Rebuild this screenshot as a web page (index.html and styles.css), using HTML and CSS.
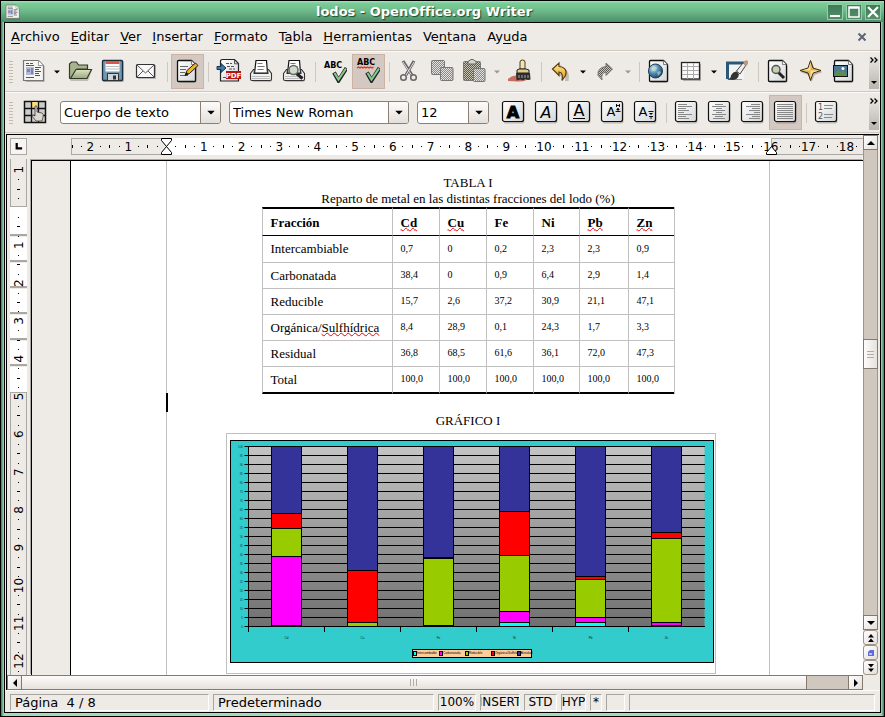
FILE: index.html
```html
<!DOCTYPE html>
<html lang="es">
<head>
<meta charset="utf-8">
<title>lodos - OpenOffice.org Writer</title>
<link rel="stylesheet" href="styles.css">
</head>
<body>
<svg class="defs" aria-hidden="true">
  <defs>
    <linearGradient id="g-paper" x1="0" y1="0" x2="1" y2="1"><stop offset="0" stop-color="#fff"/><stop offset="1" stop-color="#d4d6d8"/></linearGradient>
    <linearGradient id="g-gold" x1="0" y1="0" x2="0" y2="1"><stop offset="0" stop-color="#fff0a0"/><stop offset="1" stop-color="#e0900c"/></linearGradient>
    <linearGradient id="g-folder" x1="0" y1="0" x2="0" y2="1"><stop offset="0" stop-color="#dfe3c4"/><stop offset="1" stop-color="#9aa67e"/></linearGradient>
    <radialGradient id="g-globe" cx=".35" cy=".3" r=".8"><stop offset="0" stop-color="#d4ecf8"/><stop offset=".5" stop-color="#4d86ac"/><stop offset="1" stop-color="#123a5c"/></radialGradient>
    <linearGradient id="g-plot" x1="0" y1="0" x2="0" y2="1"><stop offset="0" stop-color="#c4c4c4"/><stop offset="1" stop-color="#707070"/></linearGradient>
    <pattern id="p-dis" width="2" height="2" patternUnits="userSpaceOnUse"><rect width="2" height="2" fill="#e4e2de"/><path d="M0 0h1v1H0zM1 1h1v1H1z" fill="#8c8a86"/></pattern>
    <pattern id="p-disdark" width="2" height="2" patternUnits="userSpaceOnUse"><rect width="2" height="2" fill="#c8c4b4"/><path d="M0 0h1v1H0zM1 1h1v1H1z" fill="#5c5a50"/></pattern>
    <symbol id="page" viewBox="0 0 24 24"><path d="M3.500 3.500q0-1 1-1h12l4 4v15q0 1-1 1h-15q-1 0-1-1z" fill="#000" opacity=".22" transform="translate(1 1)"/><path d="M2.500 2.500q0-1 1-1h13l4 4v16q0 1-1 1h-16q-1 0-1-1z" fill="url(#g-paper)" stroke="#111" stroke-width="1.300"/><path d="M16.500 1.500v4h4z" fill="#f4f4f4" stroke="#555" stroke-width=".7"/></symbol>
    <symbol id="plate" viewBox="0 0 24 24"><rect x="2.500" y="2.500" width="21" height="21" rx="2" fill="#000" opacity=".22"/><rect x="1.500" y="1.500" width="21" height="20" rx="2" fill="url(#g-paper)" stroke="#111" stroke-width="1.200"/></symbol>
    <symbol id="news" viewBox="0 0 24 24"><path d="M2.500 1.500h14l5 5v15.500h-19z" fill="#000" opacity=".25" transform="translate(1 1)"/><path d="M1.500 1.500h15l5 5v15h-20z" fill="#f4f4f2" stroke="#777" stroke-width="1.200"/><path d="M16.500 1.500v5h5z" fill="#fff" stroke="#999"/><path d="M4 4.500h3m1 0h3M13 8.500h6m-6 2h4m-4 2h6m-6 2h4m-4 2h5M4 18.500h8m-8-12h8" stroke="#555"/><rect x="4" y="8" width="8" height="8" fill="#b4b8d8"/><path d="M5 10h3v3H5zM9 9h2v6H9z" fill="#7c84b0"/></symbol>
    <symbol id="drop" viewBox="0 0 6 4"><path d="M0 .5h6L3 3.500z"/></symbol>
    <symbol id="printer" viewBox="0 0 24 24"><path d="M2 14l4-5h12l4 5v6q0 2-2 2H4q-2 0-2-2z" fill="#000" opacity=".2" transform="translate(1 1)"/><path d="M5.500 14L7 1.500h10.500L18.500 14z" fill="#fff" stroke="#111" stroke-width="1.200"/><path d="M8.500 4.500h5m-5 3h7m-7 3h6" stroke="#777"/><path d="M1.500 14.500l3-4h1l-.5 4h14l-.5-4h1l3 4v5.500q0 1.500-1.500 1.500H3q-1.500 0-1.500-1.500z" fill="#f0f0ee" stroke="#333" stroke-width="1.100"/><path d="M3 17.500h18M3 19.500h18" stroke="#bbb"/></symbol>
    <symbol id="check" viewBox="0 0 24 24"><path d="M11 13.500l4.500 8 8-12.500" fill="none" stroke="#222" stroke-width="4"/><path d="M11.500 14l4 6.500L23 9.500" fill="none" stroke="#86c890" stroke-width="2.200"/></symbol>
  </defs>
</svg>

<div class="window">
  <header class="titlebar">
    <svg class="app-icon"><use href="#news"/></svg>
    <h1 class="title">lodos - OpenOffice.org Writer</h1>
    <button class="win-btn" aria-label="Minimizar"><svg viewBox="0 0 14 14"><path d="M2 11h10" stroke="#fff" stroke-width="2"/></svg></button>
    <button class="win-btn" aria-label="Maximizar"><svg viewBox="0 0 14 14"><path d="M2 2h10v10H2zM2 3h10" fill="none" stroke="#fff" stroke-width="1.500"/></svg></button>
    <button class="win-btn" aria-label="Cerrar"><svg viewBox="0 0 14 14"><path d="M2 2l10 10M12 2L2 12" stroke="#fff" stroke-width="2.200"/></svg></button>
  </header>

  <div class="client">
    <nav class="menubar">
      <button><u>A</u>rchivo</button><button><u>E</u>ditar</button><button><u>V</u>er</button><button><u>I</u>nsertar</button><button><u>F</u>ormato</button><button>T<u>a</u>bla</button><button><u>H</u>erramientas</button><button>Ve<u>n</u>tana</button><button>Ay<u>u</u>da</button>
      <button class="doc-close" aria-label="Cerrar documento"><svg viewBox="0 0 10 10"><path d="M1.500 1.500l7 7M8.500 1.500l-7 7" stroke="#5c6478" stroke-width="2"/></svg></button>
    </nav>

    <div class="toolbar">
      <span class="handle"></span>
      <button class="tool split" aria-label="Nuevo"><svg><use href="#news"/></svg></button>
      <button class="arrow" aria-label="Opciones de nuevo"><svg><use href="#drop"/></svg></button>
      <button class="tool" aria-label="Abrir"><svg viewBox="0 0 24 24"><path d="M2 20V6q0-1 1-2l1-1h5l2 3h9v4h4l-4 11H3z" fill="#000" opacity=".2" transform="translate(0 1)"/><path d="M1.500 19V5l2-2h5l2 3h9v4H9L4 19.500H2z" fill="#a9b48c" stroke="#333a28" stroke-width="1.200"/><path d="M2.500 19.500L8 10.500h15.500L19 19.500z" fill="url(#g-folder)" stroke="#333a28" stroke-width="1.200"/></svg></button>
      <button class="tool" aria-label="Guardar"><svg viewBox="0 0 24 24"><rect x="2" y="2" width="21" height="21" rx="1" opacity=".22"/><rect x="1.500" y="1.500" width="20" height="20" rx="1" fill="#6f97b4" stroke="#1c2c38" stroke-width="1.300"/><rect x="4.500" y="2" width="14" height="10.500" fill="#fff"/><path d="M4.500 2h14v3h-14z" fill="#d8584c"/><path d="M5 7.500h13M5 10h13" stroke="#bbb"/><path d="M6.500 14.500h11v7h-11z" fill="#d0d4d6" stroke="#333"/><path d="M12 16.500h3v4h-3z" fill="#333"/></svg></button>
      <button class="tool" aria-label="Correo"><svg viewBox="0 0 24 24"><rect x="4" y="6" width="18" height="14" opacity=".22"/><rect x="2.500" y="5.500" width="18" height="13" rx="1" fill="#f8f8f8" stroke="#333" stroke-width="1.200"/><path d="M3 6l8.500 8L20 6M3 18l6-6m11 6l-6-6" fill="none" stroke="#555"/></svg></button>
      <span class="sep"></span>
      <button class="tool active" aria-label="Editar archivo" aria-pressed="true"><svg viewBox="0 0 24 24"><use href="#page"/><path d="M5 7.500h8M5 10.500h6M5 13.500h5M5 16.500h8" stroke="#666"/><path d="M10 16.500l2-5L20.500 4l2.500 2.500-8.500 8z" fill="#f4b020" stroke="#222"/><path d="M10 16.500l1.500-3.500 2 2z" fill="#111"/></svg></button>
      <span class="sep"></span>
      <button class="tool" aria-label="Exportar a PDF"><svg viewBox="0 0 24 24"><path d="M4.500 22V2.500q0-2 2-2h12l4 4V22z" fill="url(#g-paper)" stroke="#222" stroke-width="1.200"/><path d="M18.500.8v4h4" fill="none" stroke="#555"/><path d="M10 4.500h6m-5 3h8m-6 2.500h6M7 18.500h3" stroke="#555" stroke-dasharray="3 1"/><path d="M1 7.500h4v-3l5 4.500-5 4.500v-3H1z" fill="#3f7ba4" stroke="#14324c"/><rect x="10" y="12" width="15" height="8" fill="#b81414"/><text class="pdf" x="17.500" y="18.500">PDF</text></svg></button>
      <button class="tool" aria-label="Imprimir"><svg><use href="#printer"/></svg></button>
      <button class="tool" aria-label="Vista preliminar"><svg viewBox="0 0 24 24"><use href="#printer"/><path d="M14.500 14.500l6 5" stroke="#222" stroke-width="3"/><circle cx="11.500" cy="11" r="4.500" fill="#d0dcc8" stroke="#666" stroke-width="1.500"/></svg></button>
      <span class="sep"></span>
      <button class="tool" aria-label="Ortografía"><svg viewBox="0 0 24 24"><text class="abc" x="1" y="9">ABC</text><use href="#check"/></svg></button>
      <button class="tool active" aria-label="Revisión automática" aria-pressed="true"><svg viewBox="0 0 24 24"><text class="abc" x="1" y="6">ABC</text><path d="M1 9l1.500-1L4 9l1.500-1L7 9l1.500-1L10 9l1.500-1L13 9l1.500-1L16 9l1.500-1" fill="none" stroke="#f03010" stroke-width="1.300"/><use href="#check"/></svg></button>
      <span class="sep"></span>
      <button class="tool" aria-label="Cortar"><svg viewBox="0 0 24 24"><path d="M6 2l9 14M17 2L9 16" stroke="#666" stroke-width="3"/><path d="M6 3l8.500 13M17 3L9 16" stroke="#ddd" stroke-width="1"/><circle cx="6.500" cy="18.500" r="2.800" fill="none" stroke="#666" stroke-width="1.500"/><circle cx="16.500" cy="18.500" r="2.800" fill="none" stroke="#666" stroke-width="1.500"/></svg></button>
      <button class="tool" aria-label="Copiar"><svg viewBox="0 0 24 24"><rect x="1.500" y="1.500" width="13" height="14" rx="1" fill="url(#p-dis)" stroke="#777"/><rect x="10.500" y="8.500" width="12.500" height="13" rx="1" fill="url(#p-dis)" stroke="#777"/></svg></button>
      <button class="tool split" aria-label="Pegar"><svg viewBox="0 0 24 24"><rect x="1.500" y="2.500" width="17" height="19" rx="1" fill="url(#p-disdark)" stroke="#777"/><path d="M6 5V2.500l3-2h2l3 2V5z" fill="#d8d6d0" stroke="#666"/><rect x="11.500" y="9.500" width="11.500" height="13" rx="1" fill="url(#p-dis)" stroke="#777"/></svg></button>
      <button class="arrow off" aria-label="Opciones de pegar"><svg><use href="#drop"/></svg></button>
      <button class="tool" aria-label="Pincel de formato"><svg viewBox="0 0 24 24"><path d="M0 20q5-5 10-3l10 2q-2 4-10 3.500Q4 22 0 22z" fill="#b84434" opacity=".75"/><path d="M12 10V3q0-2 2.500-2T17 3v7z" fill="#f0e4b8" stroke="#4c3c18"/><path d="M9 14v-3l2-1h7l3 1v3z" fill="#e4cc8c" stroke="#222"/><path d="M8 14h14l.5 6.500q-3 1-5-.5-2 2-5 .5l-4 1z" fill="#2c2c2c"/><path d="M11 16v3m3-3v3m3-3v3m3-3v3" stroke="#aaa"/></svg></button>
      <span class="sep"></span>
      <button class="tool split" aria-label="Deshacer"><svg viewBox="0 0 24 24"><path d="M5.500 10l7-6v3.500q9 1 7 13h-3.500q1.500-7-3.500-7.500v3.500z" opacity=".2" transform="translate(1 1.500)"/><path d="M4.500 10L11 4v3.500q9 1 6.500 9l-3.500 5q1.500-8-3-8.500v3.500z" fill="url(#g-gold)" stroke="#5c3c08" stroke-width="1.200"/></svg></button>
      <button class="arrow" aria-label="Opciones de deshacer"><svg><use href="#drop"/></svg></button>
      <button class="tool split" aria-label="Restaurar"><svg viewBox="0 0 24 24"><path d="M19.500 10L13 4v3.500q-9 1-8 9l4 4.500q-1.500-7 4-8v3.500z" fill="url(#p-disdark)" stroke="#777"/></svg></button>
      <button class="arrow off" aria-label="Opciones de restaurar"><svg><use href="#drop"/></svg></button>
      <span class="sep"></span>
      <button class="tool" aria-label="Hiperenlace"><svg viewBox="0 0 24 24"><use href="#page"/><circle cx="8.500" cy="12" r="7" fill="url(#g-globe)" stroke="#1c3c58"/><path d="M5 9l3-2 2 2-2 3H5zM10 13l3-1 1 2-3 3z" fill="#c4dccc" opacity=".6"/></svg></button>
      <button class="tool split" aria-label="Tabla"><svg viewBox="0 0 24 24"><rect x="4" y="5" width="18" height="17" opacity=".25"/><rect x="2.500" y="3.500" width="18" height="16.500" fill="#fafafa" stroke="#222" stroke-width="1.300"/><path d="M3 7.500h17M3 11.500h17M3 15.500h17M8.500 4v16M14.500 4v16" stroke="#aaa"/></svg></button>
      <button class="arrow" aria-label="Opciones de tabla"><svg><use href="#drop"/></svg></button>
      <button class="tool" aria-label="Dibujo"><svg viewBox="0 0 24 24"><path d="M2 3h17v17H2z" fill="#f2f2f0"/><path d="M2.500 20V4H20" fill="none" stroke="#2c5878" stroke-width="3"/><path d="M3 20.500h14" stroke="#999"/><path d="M2 20.500q4-1 4-4 2-4 6-4l2 3q-1 5-6 5.500z" fill="#333"/><path d="M11.500 12L18 4l3 2-6 9z" fill="#eee" stroke="#444"/><path d="M18 4l3-3 2 1v3l-2 2z" fill="#c09878"/></svg></button>
      <span class="sep"></span>
      <button class="tool" aria-label="Buscar"><svg viewBox="0 0 24 24"><use href="#page"/><path d="M12 13l6 6" stroke="#222" stroke-width="3"/><circle cx="10" cy="10.500" r="4" fill="#c4d0b4" stroke="#555" stroke-width="1.500"/></svg></button>
      <button class="tool" aria-label="Navegador"><svg viewBox="0 0 24 24"><path d="M12.500 2l3 8 8 3-8 3-3 7-3-7-8-3 8-3z" opacity=".25"/><path d="M11.500 1.500l2.500 7.500 8 2.500-8 2.500-2.500 7.500L9 14l-8-2.500L9 9z" fill="#e4b04c" stroke="#3c2c10"/><path d="M11.500 3v8.500H3L9.500 9.500zM11.500 11.500h8.500l-6 2-2.500 6z" fill="#fff0bc" opacity=".75"/></svg></button>
      <button class="tool" aria-label="Galería"><svg viewBox="0 0 24 24"><use href="#page"/><rect x="1.500" y="6.500" width="14" height="11" fill="#4c7898" stroke="#111"/><path d="M2 16l4-6 3 3 2-2 4 5v1H2z" fill="#5c8c54"/><circle cx="11" cy="9.500" r="1.500" fill="#fff"/></svg></button>
      <button class="more" aria-label="Más botones"><svg viewBox="0 0 10 35"><path d="M1.500 3.500L4 6 1.500 8.500M5.500 3.500L8 6 5.500 8.500" fill="none" stroke="#000" stroke-width="1.300"/><path d="M2 27h6l-3 3z"/></svg></button>
    </div>

    <div class="toolbar">
      <span class="handle"></span>
      <button class="tool styles" aria-label="Estilo y formato"><svg viewBox="0 0 24 24"><rect x="1.500" y="1.500" width="21" height="21" fill="#ccc" stroke="#111" stroke-width="1.500"/><path d="M9 2h6v6H9z" fill="#fcdc7c"/><path d="M8.500 1v22M15.500 1v22M1 8.500h22M1 15.500h22" stroke="#111" stroke-width="1.300"/><path d="M12 6q2-1 2 1v5l5 1q2 1 1 4l-1 4h-6l-4-5q0-2 3 0z" fill="#ddd8d0" stroke="#444" stroke-width=".8"/></svg></button>
      <label class="combo combo-style"><select aria-label="Estilo de párrafo"><option>Cuerpo de texto</option></select><span class="combo-btn"><svg><use href="#drop"/></svg></span></label>
      <label class="combo combo-font"><select aria-label="Nombre de fuente"><option>Times New Roman</option></select><span class="combo-btn"><svg><use href="#drop"/></svg></span></label>
      <label class="combo combo-size"><select aria-label="Tamaño de fuente"><option>12</option></select><span class="combo-btn"><svg><use href="#drop"/></svg></span></label>
      <button class="tool" aria-label="Negrita"><svg viewBox="0 0 24 24"><use href="#plate"/><text class="glyph heavy" x="12" y="18">A</text></svg></button>
      <button class="tool" aria-label="Cursiva"><svg viewBox="0 0 24 24"><use href="#plate"/><text class="glyph slant" x="12" y="18">A</text></svg></button>
      <button class="tool" aria-label="Subrayado"><svg viewBox="0 0 24 24"><use href="#plate"/><text class="glyph" x="12" y="16">A</text><path d="M6 18.500h12" stroke="#000"/></svg></button>
      <button class="tool" aria-label="Superíndice"><svg viewBox="0 0 24 24"><use href="#plate"/><text class="glyph small" x="11" y="16">A</text><path d="M16.500 4v3M19.500 4v3M16.500 5.500h3M15.500 11.500h5M18 8v3" stroke="#111"/><path d="M16 10l2-2 2 2z"/></svg></button>
      <button class="tool" aria-label="Subíndice"><svg viewBox="0 0 24 24"><use href="#plate"/><text class="glyph small" x="10" y="16">A</text><path d="M15.500 11.500h5M16 16.500h4M18 16v3" stroke="#111"/><path d="M16 13h4l-2 2z"/></svg></button>
      <span class="sep"></span>
      <button class="tool" aria-label="Alinear a la izquierda"><svg viewBox="0 0 24 24"><use href="#plate"/><path d="M4 4.500h9M4 6.500h14M4 8.500h8M4 10.500h11M4 12.500h6M4 14.500h14M4 16.500h8M4 18.500h11" stroke="#888"/></svg></button>
      <button class="tool" aria-label="Centrar"><svg viewBox="0 0 24 24"><use href="#plate"/><path d="M8 4.500h8M5 6.500h14M9 8.500h6M6 10.500h12M9 12.500h6M5 14.500h14M8 16.500h8M6 18.500h12" stroke="#888"/></svg></button>
      <button class="tool" aria-label="Alinear a la derecha"><svg viewBox="0 0 24 24"><use href="#plate"/><path d="M11 4.500h9M6 6.500h14M12 8.500h8M9 10.500h11M14 12.500h6M6 14.500h14M12 16.500h8M9 18.500h11" stroke="#888"/></svg></button>
      <button class="tool active" aria-label="Justificado" aria-pressed="true"><svg viewBox="0 0 24 24"><use href="#plate"/><path d="M4 4.500h16M4 6.500h16M4 8.500h16M4 10.500h16M4 12.500h16M4 14.500h16M4 16.500h16M4 18.500h16" stroke="#888"/></svg></button>
      <span class="sep"></span>
      <button class="tool" aria-label="Numeración"><svg viewBox="0 0 24 24"><use href="#plate"/><path d="M10 5.500h9M10 8.500h8M10 14.500h9M10 17.500h8" stroke="#888"/><text class="num" x="4" y="10">1</text><text class="num" x="4" y="19">2</text></svg></button>
      <button class="more" aria-label="Más botones"><svg viewBox="0 0 10 35"><path d="M1.500 3.500L4 6 1.500 8.500M5.500 3.500L8 6 5.500 8.500" fill="none" stroke="#000" stroke-width="1.300"/><path d="M2 27h6l-3 3z"/></svg></button>
    </div>

    <main class="workspace">
      <div class="view">
        <div class="hruler">
          <button class="tab-type" aria-label="Tipo de tabulador"><svg viewBox="0 0 10 10"><path d="M3 1v6h6" fill="none" stroke="#000" stroke-width="2.500"/></svg></button>
          <div class="hscale"><span class="out"></span><span class="in"></span><span class="out last"></span><svg id="hticks"></svg></div>
        </div>
        <div class="body">
          <div class="vruler"><span class="vout"></span><span class="vin first"></span><span class="vin"></span><span class="vin"></span><span class="vin"></span><span class="vin"></span><span class="vin"></span><span class="vin end"></span><span class="vout grow"></span><svg id="vticks"></svg></div>
          <div class="desk">
            <article class="page">
              <div class="text">
                <i class="caret"></i>
                <p>TABLA I</p>
                <p>Reparto de metal en las distintas fracciones del lodo (%)</p>
                <table>
                  <thead><tr><th class="name">Fracción</th><th><span class="sp">Cd</span></th><th><span class="sp">Cu</span></th><th>Fe</th><th class="ni">Ni</th><th class="pb"><span class="sp">Pb</span></th><th class="zn"><span class="sp">Zn</span></th></tr></thead>
                  <tbody>
                    <tr><th>Intercambiable</th><td>0,7</td><td>0</td><td>0,2</td><td>2,3</td><td>2,3</td><td>0,9</td></tr>
                    <tr><th>Carbonatada</th><td>38,4</td><td>0</td><td>0,9</td><td>6,4</td><td>2,9</td><td>1,4</td></tr>
                    <tr><th>Reducible</th><td>15,7</td><td>2,6</td><td>37,2</td><td>30,9</td><td>21,1</td><td>47,1</td></tr>
                    <tr><th>Orgánica/<span class="sp">Sulfhídrica</span></th><td>8,4</td><td>28,9</td><td>0,1</td><td>24,3</td><td>1,7</td><td>3,3</td></tr>
                    <tr><th>Residual</th><td>36,8</td><td>68,5</td><td>61,6</td><td>36,1</td><td>72,0</td><td>47,3</td></tr>
                    <tr><th>Total</th><td>100,0</td><td>100,0</td><td>100,0</td><td>100,0</td><td>100,0</td><td>100,0</td></tr>
                  </tbody>
                </table>
                <p class="caption">GRÁFICO I</p>
                <figure><svg id="chart" viewBox="0 0 484 223"></svg></figure>
              </div>
            </article>
          </div>
        </div>
        <div class="hscroll">
          <button class="sb" aria-label="Izquierda"><svg viewBox="0 0 10 10"><path d="M7 1v8L3 5z"/></svg></button>
          <div class="htrack"><div class="hthumb"><i></i><i></i><i></i></div></div>
          <button class="sb" aria-label="Derecha"><svg viewBox="0 0 10 10"><path d="M3 1v8l4-4z"/></svg></button>
        </div>
      </div>
      <div class="vscroll">
        <button class="sb" aria-label="Arriba"><svg viewBox="0 0 10 10"><path d="M1 7h8L5 3z"/></svg></button>
        <div class="vtrack"><div class="vthumb"><i></i><i></i><i></i></div></div>
        <button class="sb" aria-label="Abajo"><svg viewBox="0 0 10 10"><path d="M1 3h8L5 7z"/></svg></button>
        <button class="sb round" aria-label="Página anterior"><svg viewBox="0 0 10 10"><path d="M2 4.500h6L5 1zM2 9h6L5 5.500z"/></svg></button>
        <button class="sb round" aria-label="Navegación"><svg viewBox="0 0 10 10"><path d="M2 4l2-2h4v6H2z" fill="#5c6cdc"/><path d="M3 5h3v2H3z" fill="#b4bcfc"/></svg></button>
        <button class="sb round" aria-label="Página siguiente"><svg viewBox="0 0 10 10"><path d="M2 1h6L5 4.500zM2 5.500h6L5 9z"/></svg></button>
      </div>
    </main>

    <footer class="status">
      <span class="f page-no">Página&nbsp; 4 / 8</span><span class="f style-name">Predeterminado</span><span class="f c zoom">100%</span><span class="f c ins">INSERT</span><span class="f c std">STD</span><span class="f c hyp">HYP</span><span class="f c mod">*</span><span class="f sig"></span><span class="f rest"></span>
    </footer>
  </div>
</div>
<script src="script.js"></script>
</body>
</html>
```

FILE: styles.css
```css
* { box-sizing: border-box; }
body { margin: 0; font: 13px/16px "DejaVu Sans", sans-serif; color: #000; }
.defs { position: absolute; width: 0; height: 0; }
button { appearance: none; border: 0; background: none; padding: 0; margin: 0; font: inherit; color: inherit; display: flex; align-items: center; justify-content: center; flex: none; }
p, h1, figure { margin: 0; }

.window { min-height: 100vh; display: flex; flex-direction: column; border: 1px solid #000; background: #000; }
.titlebar { display: flex; align-items: center; gap: 3px; height: 21px; padding: 0 3px 0 4px; background: linear-gradient(#a8e4bc 0, #7ccd98 2px, #6fbd8c 9px, #4c8f68 100%); }
.app-icon { width: 16px; height: 16px; }
.title { flex: 1; text-align: center; font-size: 13px; line-height: 16px; font-weight: bold; color: #fff; text-shadow: 1px 1px 1px #1d4a30; }
.win-btn { width: 16px; height: 16px; border: 1px solid #8fd0a6; background: linear-gradient(#3f7a58, #558f6c); }
.win-btn svg { width: 14px; height: 14px; }

.client { flex: 1; display: flex; flex-direction: column; border: solid #8fcca4; border-width: 0 3px 3px; background: #eeebe6; box-shadow: inset 1px 0 #000, inset -1px 0 #000, inset 0 1px #000, inset 0 -1px #000; padding: 1px; border-image: linear-gradient(90deg, #3d7a57, #a5dcb8 3px, #a5dcb8 calc(100% - 3px), #3d7a57) 3; }

.menubar { display: flex; height: 28px; padding: 0 13px 0 0; border-bottom: 1px solid #d0c8bf; }
.menubar button { display: block; padding: 0 5px 0 6px; line-height: 27px; }
.menubar button u { text-underline-offset: 2px; text-decoration-thickness: 1px; }
.menubar .doc-close { margin-left: auto; padding: 0; display: flex; }
.doc-close svg { width: 10px; height: 10px; }

.toolbar { display: flex; align-items: center; height: 41px; padding: 0 1px 0 4px; border-top: 1px solid #fbfaf8; border-bottom: 1px solid #d0c8bf; }
.handle { width: 4px; height: 22px; margin-right: 6px; background: repeating-linear-gradient(#c8baac 0 1px, transparent 1px 3px); }
.tool { width: 33px; height: 35px; padding: 0 2px 2px 0; }
.tool svg { width: 24px; height: 24px; overflow: visible; flex: none; }
.tool.split { width: 31px; }
.tool.active { background: #d3c9c2; box-shadow: inset 0 0 0 1px #cbb4a4; }
.tool.styles { margin-right: 8px; }
.tool text { font-family: "DejaVu Sans", sans-serif; }
.abc { font-size: 8px; font-weight: bold; }
.pdf { font-size: 7px; font-weight: bold; fill: #fff; text-anchor: middle; }
.glyph { font-size: 16px; text-anchor: middle; }
.heavy { font-weight: bold; stroke: #000; stroke-width: 1px; }
.slant { font-style: oblique; }
.small { font-size: 13px; }
.num { font-size: 8px; fill: #555; }
.arrow { width: 14px; height: 35px; }
.arrow svg { width: 6px; height: 4px; }
.arrow.off { opacity: .35; }
.sep { flex: none; width: 8px; height: 20px; background: linear-gradient(#d0c8bf, #d0c8bf) center / 1px 100% no-repeat; }
.more { width: 10px; height: 35px; margin-left: auto; background: linear-gradient(#eeebe6, #b8b4ae); }
.more svg { width: 10px; height: 35px; }

.combo { display: grid; grid-template-columns: 1fr 20px; flex: none; height: 23px; margin-right: 8px; border: 1px solid #8c7f74; border-radius: 3px; background: #fff; overflow: hidden; }
.combo select { grid-area: 1 / 1 / 2 / 3; appearance: none; border: 0; background: none; font: inherit; color: inherit; padding: 0 0 0 3px; margin: 0; outline: 0; min-width: 0; }
.combo-btn { grid-area: 1 / 2; display: flex; align-items: center; justify-content: center; pointer-events: none; border-left: 1px solid #8c7f74; background: linear-gradient(#fdfcfb, #e4dfda); }
.combo-btn svg { width: 8px; height: 5px; }
.combo-style { width: 161px; }
.combo-font { width: 180px; }
.combo-size { width: 72px; }

.workspace { flex: 1; display: flex; margin: 1px 1px 0; padding-right: 1px; border: solid #000; border-width: 1px 0 0 1px; }
.view { flex: 1; min-width: 0; display: flex; flex-direction: column; }
.hruler { display: flex; height: 24px; padding: 3px 0 0 3px; }
.tab-type { width: 17px; height: 17px; border: 1px solid #aaa8a4; background: #f6f5f2; }
.tab-type svg { width: 9px; height: 9px; }
.hscale { position: relative; flex: 1; display: flex; height: 17px; margin-left: 44px; overflow: hidden; font-size: 12px; }
.hscale svg { position: absolute; left: 0; top: 0; width: 100%; height: 17px; }
.out { width: 96px; height: 17px; border: 1px solid #aaa8a4; }
.in { flex: 1; background: #fff; }
.out.last { width: 92px; border-right: 0; }
.body { flex: 1; display: flex; }
.vruler { position: relative; width: 24px; padding-left: 3px; display: flex; flex-direction: column; overflow: hidden; font-size: 12px; }
.vruler svg { position: absolute; left: 3px; top: 0; width: 17px; height: 100%; }
.vruler span { width: 17px; flex: none; }
.vout { height: 48px; border: 1px solid #aaa8a4; border-top: 0; }
.vruler .grow { flex: 1 0 0; border-top: 1px solid #aaa8a4; border-bottom: 0; }
.vin { height: 26px; background: #fff; border-top: 1px solid #aaa8a4; border-bottom: 1px solid #aaa8a4; box-shadow: inset 0 1px #eeebe6; }
.vin.first { height: 28px; border-top: 0; box-shadow: none; }
.vin.end { height: 27px; border-bottom: 0; }

.desk { flex: 1; min-width: 0; padding-left: 38px; border: solid #000; border-width: 1px 0 0 1px; box-shadow: -1px -1px #aaa8a4; margin-top: 1px; }
.page { height: 100%; border-left: 1px solid #000; background: #fff; padding: 0 93px 0 95px; }
.text { position: relative; height: 100%; border: solid #c0c0c0; border-width: 0 1px; padding-top: 14px; text-align: center; font-family: "Liberation Serif", serif; }
.caret { position: absolute; left: -1px; top: 232px; width: 2px; height: 19px; background: #000; }
table { margin: 0 auto; width: 413px; table-layout: fixed; border-spacing: 0; border-right: 1px solid #c0c0c0; text-align: left; }
th, td { height: 26px; padding: 4px 0 0 8px; vertical-align: top; border-left: 1px solid #c0c0c0; border-bottom: 1px solid #c0c0c0; font-size: 10px; line-height: 16px; font-weight: normal; }
th { font-size: 13px; padding-top: 5px; }
thead th { height: 29px; width: 47px; padding-top: 6px; font-weight: bold; border-top: 2px solid #000; border-bottom-color: #000; }
thead .name { width: 130px; }
thead .ni { width: 46px; }
thead .pb { width: 49px; }
thead .zn { width: 46px; }
tbody tr:first-child > * { height: 27px; padding-top: 5px; }
tbody tr:last-child > * { height: 27px; border-bottom: 2px solid #000; }
.sp { text-decoration: underline wavy #e00 1px; text-underline-offset: 0; text-decoration-skip-ink: none; }
.caption { margin-top: 19px; }
figure { width: 490px; height: 241px; margin: 4px auto 0; padding: 6px 1px 0 3px; border: 1px solid #c0c0c0; position: relative; left: 3px; }
#chart { display: block; width: 484px; height: 223px; font-family: "Liberation Sans", sans-serif; font-size: 3px; }

.hscroll { display: flex; height: 15px; }
.sb { width: 15px; height: 15px; border: 1px solid #85796e; background: linear-gradient(135deg, #fff, #e4dfda); }
.sb svg { width: 10px; height: 10px; }
.sb.round { border-radius: 3px; border-color: #a09488; }
.htrack { flex: 1; background: #d0c8bf; border: solid #85796e; border-width: 1px 0; display: flex; }
.hthumb { width: 95%; margin: -1px 0; border: solid #85796e; border-width: 1px 1px 1px 0; background: linear-gradient(#fdfcfb, #e6e1dc); display: flex; align-items: center; justify-content: center; gap: 2px; }
.hthumb i { width: 1px; height: 7px; background: #b4aaa0; }
.vscroll { width: 15px; flex: none; display: flex; flex-direction: column; padding-bottom: 15px; }
.vtrack { flex: 1; background: #d0c8bf; border: solid #a09488; border-width: 0 1px; display: flex; flex-direction: column; padding-top: 189px; }
.vthumb { height: 30px; margin: 0 -1px; border: 1px solid #85796e; background: linear-gradient(90deg, #fdfcfb, #e6e1dc); display: flex; flex-direction: column; align-items: center; justify-content: center; gap: 2px; }
.vthumb i { width: 7px; height: 1px; background: #b4aaa0; }

.status { display: flex; gap: 4px; height: 22px; padding: 3px 5px 1px 5px; border-top: 1px solid #fbfaf8; }
.f { flex: none; border: 1px solid; border-color: #a8a49e #fff #fff #a8a49e; padding-left: 4px; white-space: nowrap; overflow: hidden; height: 17px; line-height: 15px; }
.c { display: flex; justify-content: center; padding: 0; font-size: 12px; }
.page-no { width: 199px; }
.style-name { flex: 1 0 200px; }
.zoom { width: 38px; }
.ins { width: 40px; }
.std { width: 33px; }
.hyp { width: 25px; }
.mod { width: 12px; }
.sig { width: 19px; }
.rest { width: 246px; }
```

FILE: script.js
```js
const CM = 37.8;

// Tick marks between two figures: a dot at each quarter, a dash at the half.
// Figures that would not fit whole on the scale are left out.
const hticks = document.getElementById('hticks');
const hmax = hticks.clientWidth;
let h = '';
for (let n = -3; 95 + n * CM < hmax; n++) {
  const x = 95 + n * CM;
  if (n !== 0 && x > 8 && x < hmax - 8) h += `<text x="${x}" y="13" text-anchor="middle">${Math.abs(n)}</text>`;
  [1, 2, 3].forEach(q => {
    const t = Math.round(x + q * CM / 4);
    h += q === 2 ? `<rect x="${t}" y="7" width="1" height="3"/>` : `<rect x="${t}" y="8" width="1" height="1"/>`;
  });
}
const tri = (x, y, d) => `<path d="M${x - 5} ${y}h10v${2 * d}l-5 ${6 * d}l-5 ${-6 * d}z" fill="#fff" stroke="#000"/>`;
h += tri(95.5, .5, 1) + tri(95.5, 16.5, -1) + tri(700.5, 16.5, -1);
hticks.innerHTML = h;

// Vertical scale: zero lies 48px below its top edge, figures read upwards.
const vticks = document.getElementById('vticks');
const vmax = vticks.clientHeight;
let v = '';
for (let n = -1; 48.5 + n * CM < vmax; n++) {
  const y = 48.5 + n * CM;
  if (n !== 0 && y < vmax - 8) v += `<text transform="translate(13 ${y}) rotate(-90)" text-anchor="middle">${Math.abs(n)}</text>`;
  [1, 2, 3].forEach(q => {
    const t = Math.round(y + q * CM / 4);
    v += q === 2 ? `<rect x="7" y="${t}" width="3" height="1"/>` : `<rect x="8" y="${t}" width="1" height="1"/>`;
  });
}
vticks.innerHTML = v;

// Stacked percentage chart.
const colors = ['#00ffff', '#ff00ff', '#99cc00', '#ff0000', '#333399'];
const fractions = ['Intercambiable', 'Carbonatada', 'Reducible', 'Orgánica/Sulfhídrica', 'Residual'];
const metals = {
  Cd: [0.7, 38.4, 15.7, 8.4, 36.8],
  Cu: [0, 0, 2.6, 28.9, 68.5],
  Fe: [0.2, 0.9, 37.2, 0.1, 61.6],
  Ni: [2.3, 6.4, 30.9, 24.3, 36.1],
  Pb: [2.3, 2.9, 21.1, 1.7, 72.0],
  Zn: [0.9, 1.4, 47.1, 3.3, 47.3]
};
const base = 186.5, left = 18.5;
let c = '<rect x=".5" y=".5" width="483" height="222" fill="#33cccc" stroke="#000"/>';
c += `<rect x="${left}" y="6" width="456" height="180" fill="url(#g-plot)"/>`;
for (let i = 0; i <= 20; i++) {
  const y = base - i * 9;
  c += `<path d="M${left - 4} ${y}H475" stroke="#000"/><text x="13" y="${y + 1}" text-anchor="end" fill="#045">${i * 5}</text>`;
}
c += `<path d="M${left} 6V192" stroke="#000"/>`;
Object.entries(metals).forEach(([name, parts], i) => {
  const x = left + 23 + i * 76;
  let sum = 0;
  parts.forEach((p, k) => {
    if (!p) return;
    const y0 = Math.floor(sum * 1.8);
    sum += p;
    const y1 = k === 4 ? 180 : Math.floor(sum * 1.8);
    c += `<rect x="${x}" y="${base - y1}" width="30" height="${y1 - y0}" fill="${colors[k]}" stroke="#000"/>`;
  });
  if (i) c += `<path d="M${left + i * 76} 187v5" stroke="#000"/>`;
  c += `<text x="${x + 15}" y="199" text-anchor="middle" fill="#022">${name}</text>`;
});
c += '<rect x="182.5" y="209.5" width="119" height="8" fill="#ffcc99" stroke="#000"/>';
c += fractions.map((f, i) => `<text x="${187 + i * 26}" y="214">${f}</text>`).join('');
c += fractions.map((f, i) => `<rect x="${183.5 + i * 26}" y="211.5" width="3" height="4" fill="${colors[i]}" stroke="#000"/>`).join('');
document.getElementById('chart').innerHTML = c;
```
